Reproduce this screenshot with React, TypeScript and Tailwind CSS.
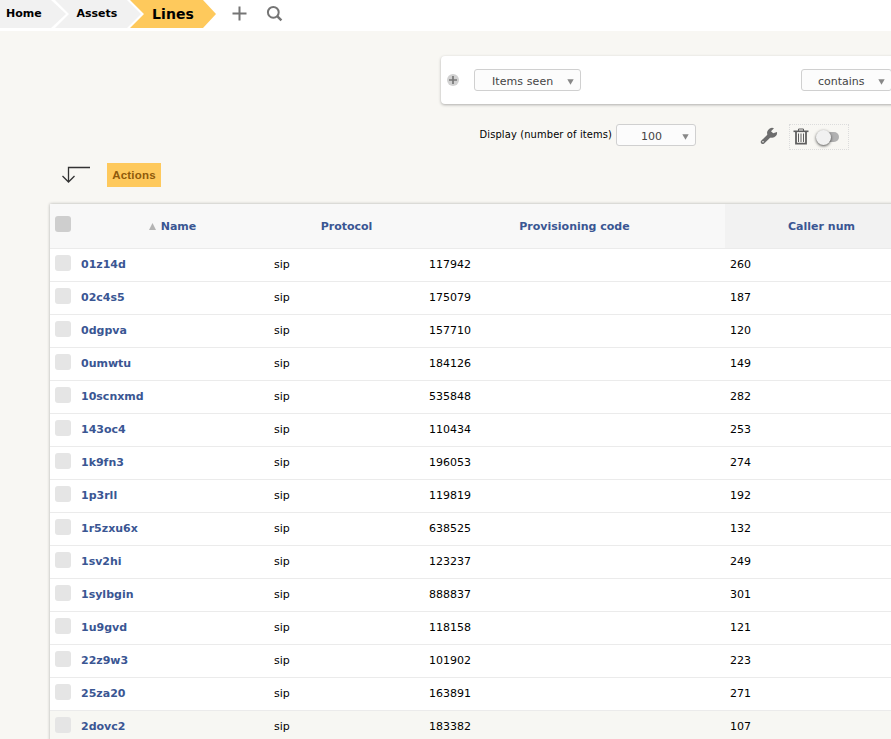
const rows: [string, string, string][] = [
  ["01z14d", "117942", "260"],
  ["02c4s5", "175079", "187"],
  ["0dgpva", "157710", "120"],
  ["0umwtu", "184126", "149"],
  ["10scnxmd", "535848", "282"],
  ["143oc4", "110434", "253"],
  ["1k9fn3", "196053", "274"],
  ["1p3rll", "119819", "192"],
  ["1r5zxu6x", "638525", "132"],
  ["1sv2hi", "123237", "249"],
  ["1sylbgin", "888837", "301"],
  ["1u9gvd", "118158", "121"],
  ["22z9w3", "101902", "223"],
  ["25za20", "163891", "271"],
  ["2dovc2", "183382", "107"],
];

const columns = "grid grid-cols-[26px_193px_155px_301px_193px]";

function Select({ label, className }: { label: string; className: string }) {
  return (
    <div className={`flex h-[22px] shrink-0 items-center rounded-[3px] border border-[#d0d0d0] bg-[#fcfcfc] text-[#444] ${className}`}>
      <span className="flex-1 whitespace-nowrap pt-[3px] leading-[14px]">{label}</span>
      <svg className="mt-[3px] h-[6px] w-[7px] shrink-0" viewBox="0 0 7 6">
        <path d="M0.3 0.3H6.7L3.5 5.8Z" fill="#888" />
      </svg>
    </div>
  );
}

function Breadcrumb() {
  return (
    <header className="flex h-[31px] items-start bg-white">
      <nav className="relative h-[28px] w-[216px]">
        <svg className="absolute inset-0" width="216" height="28">
          <path d="M0 0H51L66 14L51 28H0Z" fill="#f1f1f1" />
          <path d="M55 0H127L141 14L127 28H55L69 14Z" fill="#f1f1f1" />
          <path d="M130 0H203L216 14L203 28H130L144 14Z" fill="#fec95c" />
        </svg>
        <div className="relative flex h-[28px] items-center font-bold text-black">
          <span className="w-[70px] pl-[6px] leading-[26px]">Home</span>
          <span className="w-[75px] pl-[6.5px] leading-[26px]">Assets</span>
          <span className="pl-[7px] text-[14px] tracking-[0.1px]">Lines</span>
        </div>
      </nav>
      <svg className="ml-4 mt-[6px]" width="15" height="15" viewBox="0 0 15 15">
        <path d="M7.5 0.5V14.5M0.5 7.5H14.5" stroke="#757575" strokeWidth="2" />
      </svg>
      <svg className="ml-[19px] mt-[5px]" width="17" height="17" viewBox="0 0 17 17" fill="none" stroke="#757575">
        <circle cx="7.3" cy="7.3" r="5.4" strokeWidth="2" />
        <path d="M11.2 11.2L15.4 15.4" strokeWidth="2.4" />
      </svg>
    </header>
  );
}

function Checkbox({ dark = false }: { dark?: boolean }) {
  return <span className={`ml-[5px] block size-4 rounded-[3px] ${dark ? "mt-3 bg-[#cecece]" : "mt-[6px] bg-[#e5e5e5]"}`} />;
}

export default function App() {
  return (
    <div className="h-[739px] w-[891px] overflow-hidden bg-[#f8f7f3] font-['DejaVu_Sans',sans-serif] text-[11px] text-black">
      <Breadcrumb />

      <section className="ml-[441px] mt-[25px] flex h-[48px] w-[480px] items-center rounded-[4px] bg-white shadow-[0_1px_3px_rgba(0,0,0,0.3)]">
        <svg className="ml-[6px]" width="12" height="12" viewBox="0 0 12 12">
          <circle cx="6" cy="6" r="6" fill="#d1d1d1" />
          <path d="M6 2V10M2 6H10" stroke="#777" strokeWidth="1.7" />
        </svg>
        <Select label="Items seen" className="ml-[15px] w-[107px] pl-[17px] pr-[6px] tracking-[0.08px]" />
        <Select label="contains" className="ml-[220px] w-[91px] pl-[16px] pr-[6px]" />
      </section>

      <div className="mt-5 flex h-[22px] items-center">
        <span className="ml-[479px] w-[137px] whitespace-nowrap pl-[0.5px] font-['DejaVu_Sans_Condensed','DejaVu_Sans',sans-serif] leading-[22px] tracking-[0.13px]">Display (number of items)</span>
        <Select label="100" className="w-[80px] pl-[24px] pr-[6px]" />
        <svg className="ml-16 mt-[2px]" width="18" height="18" viewBox="0 0 18 18">
          <path d="M2.8 15L10.5 7.5" stroke="#6d6d6d" strokeWidth="4" strokeLinecap="round" />
          <path d="M14 1.2A5 5 0 1 0 17 5L13.2 6.2L11 4.2L14 1.2Z" fill="#6d6d6d" />
          <circle cx="3" cy="14.8" r="0.8" fill="#f8f7f3" />
        </svg>
        <div className="ml-[11px] mt-[4px] flex h-[26px] w-[60px] shrink-0 items-center border border-dotted border-[#dcdcdc]">
          <svg className="-mt-px ml-[3px]" width="16" height="17" viewBox="0 0 16 17" fill="none" stroke="#5f5f5f">
            <path d="M0.5 3.3H15.5" strokeWidth="1.6" />
            <path d="M5.5 3V1H10.5V3" />
            <path d="M3 4V15.7H13V4" strokeWidth="1.8" />
            <path d="M5.5 5.5V14M8 5.5V14M10.5 5.5V14" />
          </svg>
          <div className="ml-[8px] flex h-[10px] w-[22px] items-center rounded-full bg-[#b1b1b1]">
            <span className="-ml-[1px] size-[15px] shrink-0 rounded-full bg-[#f1f1f1] shadow-[0_1px_3px_rgba(0,0,0,0.7)]" />
          </div>
        </div>
      </div>

      <div className="mt-[17px] flex h-6 items-start">
        <svg className="ml-[61px] mt-[3px]" width="30" height="19" viewBox="0 0 30 19" fill="none" stroke="#333" strokeWidth="1.3">
          <path d="M29 1.5H7.5V16.5M1.5 10L7.5 16L13.5 10" />
        </svg>
        <button className="ml-4 h-6 w-[54px] bg-[#fec95c] pt-px font-['Liberation_Sans',sans-serif] text-[11.5px] font-bold tracking-[0.2px] text-[#8f5a0a]">Actions</button>
      </div>

      <main className="ml-[50px] mt-[17px] w-[868px] bg-white shadow-[0_0_3px_rgba(0,0,0,0.3)]">
        <div className={`${columns} h-[45px] border-b border-[#ebebeb] bg-[#f8f8f8] text-center font-bold leading-[45px] text-[#3a5693]`}>
          <Checkbox dark />
          <div className="flex h-[44px] items-center justify-center gap-[5px]">
            <svg className="mt-px" width="7" height="7" viewBox="0 0 7 7"><path d="M3.5 0L7 7H0Z" fill="#b4b4b4" /></svg>
            <span>Name</span>
          </div>
          <span>Protocol</span>
          <span>Provisioning code</span>
          <span className="h-[44px] bg-[#f2f2f2]">Caller num</span>
        </div>
        {rows.map(([name, code, caller], i) => (
          <div key={name} className={`${columns} h-[33px] border-b border-[#ebebeb] leading-[31px] ${i === 14 ? "bg-[#f7f7f3]" : "bg-white"}`}>
            <Checkbox />
            <span className="pl-[5px] font-bold text-[#3a5693]">{name}</span>
            <span className="pl-[5px]">sip</span>
            <span className="pl-[5px]">{code}</span>
            <span className="pl-[5px]">{caller}</span>
          </div>
        ))}
      </main>
    </div>
  );
}
